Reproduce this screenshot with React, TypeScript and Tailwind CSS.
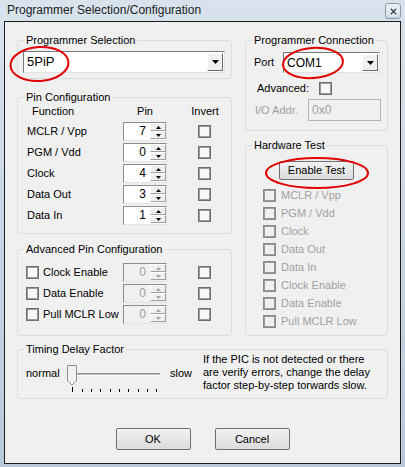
import type { ReactNode } from "react";

const GroupBox = ({
  title,
  className,
  children,
}: {
  title: string;
  className: string;
  children?: ReactNode;
}) => (
  <div className={`relative rounded-[3px] border border-[#d5dfe5] ${className}`}>
    <span className="absolute -top-[8px] left-[6px] bg-[#f0f0f0] px-[2px] leading-[14px] text-black">
      {title}
    </span>
    {children}
  </div>
);

const Arrow = ({ up, disabled }: { up?: boolean; disabled?: boolean }) => (
  <svg width="5" height="3" viewBox="0 0 5 3">
    <path
      d={up ? "M0,3 L5,3 L2.5,0 Z" : "M0,0 L5,0 L2.5,3 Z"}
      fill={disabled ? "#a6a6a6" : "#000"}
    />
  </svg>
);

const SpinHalf = ({ up, disabled }: { up?: boolean; disabled?: boolean }) => (
  <div className="flex h-[8px] w-[16px] items-center justify-center border border-t-white border-l-white border-b-[#a0a0a0] border-r-[#a0a0a0] bg-[#f0f0f0]">
    <Arrow up={up} disabled={disabled} />
  </div>
);

const Spinner = ({ value, disabled }: { value: string; disabled?: boolean }) => (
  <div
    className={`flex h-[19px] w-[44px] shrink-0 border border-t-[#8d8d8d] border-l-[#8d8d8d] border-b-[#e3e3e3] border-r-[#e3e3e3] ${
      disabled ? "bg-[#f0f0f0]" : "bg-white"
    }`}
  >
    <div
      className={`flex-1 pr-[4px] text-right text-[12px] leading-[17px] ${
        disabled ? "text-[#a0a0a0]" : "text-black"
      }`}
    >
      {value}
    </div>
    <div className="flex flex-col py-[0px] pr-[0px]">
      <SpinHalf up disabled={disabled} />
      <SpinHalf disabled={disabled} />
    </div>
  </div>
);

const CheckBox = ({ disabled }: { disabled?: boolean }) => (
  <div
    className={`h-[13px] w-[13px] shrink-0 border border-[#6f6f6f] shadow-[inset_0_0_0_1px_#9a9a9a] ${
      disabled ? "bg-[#f0f0f0] border-[#8a8a8a]" : "bg-[#f7f7f7]"
    }`}
  />
);

const Combo = ({ value, className, textSize }: { value: string; className: string; textSize: string }) => (
  <div
    className={`flex items-center border border-t-[#7a7a7a] border-l-[#7a7a7a] border-b-[#e3e3e3] border-r-[#e3e3e3] bg-white ${className}`}
  >
    <span className={`flex-1 pl-[3px] text-black ${textSize}`}>{value}</span>
    <div className="mr-[1px] flex h-[calc(100%-2px)] w-[16px] items-center justify-center border border-t-white border-l-white border-b-[#696969] border-r-[#696969] bg-[#f0f0f0]">
      <svg width="7" height="4" viewBox="0 0 7 4">
        <path d="M0,0 L7,0 L3.5,4 Z" fill="#000" />
      </svg>
    </div>
  </div>
);

const Button = ({ label }: { label: string }) => (
  <div className="flex h-[22px] w-[75px] items-center justify-center rounded-[2px] border border-[#707070] bg-gradient-to-b from-[#f2f2f2] to-[#dcdcdc] text-black">
    {label}
  </div>
);

const pinRows = [
  { name: "MCLR / Vpp", pin: "7" },
  { name: "PGM / Vdd", pin: "0" },
  { name: "Clock", pin: "4" },
  { name: "Data Out", pin: "3" },
  { name: "Data In", pin: "1" },
];

const advancedRows = ["Clock Enable", "Data Enable", "Pull MCLR Low"];

const testRows = [
  "MCLR / Vpp",
  "PGM / Vdd",
  "Clock",
  "Data Out",
  "Data In",
  "Clock Enable",
  "Data Enable",
  "Pull MCLR Low",
];

export default function App() {
  const ticks = Array.from({ length: 10 }, (_, i) => 8.3 + i * 9.33);

  return (
    <div className="relative flex h-[467px] w-[405px] flex-col bg-gradient-to-b from-[#d9e3ed] to-[#bac9d9] font-['Liberation_Sans',Arial,sans-serif] text-[11px]">
      {/* title bar */}
      <div className="flex h-[21px] items-start justify-between pl-[7px] pr-[4px]">
        <span className="mt-[3px] text-[12px] leading-[15px] text-[#222]">
          Programmer Selection/Configuration
        </span>
        <div className="mt-[3px] flex h-[16px] w-[16px] items-center justify-center rounded-[3px] border border-[#8a97a6] bg-gradient-to-b from-[#eef2f7] to-[#d2dce7]">
          <svg width="9" height="9" viewBox="0 0 9 9">
            <path d="M1.5,1.5 L7.5,7.5 M7.5,1.5 L1.5,7.5" stroke="#fff" strokeWidth="3.6" />
            <path d="M1.8,1.8 L7.2,7.2 M7.2,1.8 L1.8,7.2" stroke="#3b4654" strokeWidth="1.6" />
          </svg>
        </div>
      </div>

      {/* client area */}
      <div className="mx-[4px] h-[443px] border border-[#1e1e1e] bg-[#f0f0f0] px-[12px] pt-[18px]">
        <div className="flex gap-[13px]">
          {/* left column */}
          <div className="flex w-[215px] flex-col">
            <GroupBox title="Programmer Selection" className="h-[39px]">
              <div className="pl-[5px] pt-[10px]">
                <Combo value="5PiP" className="h-[22px] w-[202px]" textSize="text-[13px]" />
              </div>
            </GroupBox>

            <GroupBox title="Pin Configuration" className="mt-[18px] h-[137px]">
              <div className="flex flex-col pl-[9px] pt-[6px]">
                <div className="flex h-[14px] items-center leading-[14px]">
                  <span className="w-[96px] pl-[5px]">Function</span>
                  <span className="w-[44px] text-center">Pin</span>
                  <span className="ml-[16px] w-[44px] text-center">Invert</span>
                </div>
                <div className="mt-[4px] flex flex-col gap-[2px]">
                  {pinRows.map((r) => (
                    <div key={r.name} className="flex h-[19px] items-center">
                      <span className="w-[96px]">{r.name}</span>
                      <Spinner value={r.pin} />
                      <div className="ml-[31px]">
                        <CheckBox />
                      </div>
                    </div>
                  ))}
                </div>
              </div>
            </GroupBox>

            <GroupBox title="Advanced Pin Configuration" className="mt-[15px] h-[87px]">
              <div className="flex flex-col gap-[2px] pl-[8px] pt-[13px]">
                {advancedRows.map((name) => (
                  <div key={name} className="flex h-[19px] items-center">
                    <CheckBox />
                    <span className="ml-[4px] w-[80px]">{name}</span>
                    <Spinner value="0" disabled />
                    <div className="ml-[31px]">
                      <CheckBox />
                    </div>
                  </div>
                ))}
              </div>
            </GroupBox>
          </div>

          {/* right column */}
          <div className="flex w-[143px] flex-col">
            <GroupBox title="Programmer Connection" className="h-[91px]">
              <div className="flex flex-col pt-[11px]">
                <div className="flex items-center pl-[8px]">
                  <span className="w-[29px]">Port</span>
                  <Combo value="COM1" className="h-[21px] w-[97px]" textSize="text-[12px]" />
                </div>
                <div className="mt-[9px] flex h-[13px] items-center pl-[11px]">
                  <span className="w-[62px]">Advanced:</span>
                  <CheckBox />
                </div>
                <div className="mt-[4px] flex items-center pl-[9px]">
                  <span className="w-[53px] text-[#a0a0a0]">I/O Addr.</span>
                  <div className="h-[22px] w-[73px] border border-[#b5b5b5] bg-[#f0f0f0] pl-[3px] pt-[3px] text-[12px] leading-[14px] text-[#a0a0a0]">
                    0x0
                  </div>
                </div>
              </div>
            </GroupBox>

            <GroupBox title="Hardware Test" className="mt-[14px] h-[191px]">
              <div className="flex flex-col pt-[15px]">
                <div className="flex justify-center">
                  <div className="flex h-[19px] w-[75px] items-center justify-center rounded-[2px] border border-[#707070] bg-gradient-to-b from-[#f2f2f2] to-[#dcdcdc] text-black">
                    Enable Test
                  </div>
                </div>
                <div className="mt-[6px] flex flex-col pl-[17px]">
                  {testRows.map((name) => (
                    <div key={name} className="flex h-[18px] items-center">
                      <CheckBox disabled />
                      <span className="ml-[5px] text-[#a0a0a0]">{name}</span>
                    </div>
                  ))}
                </div>
              </div>
            </GroupBox>
          </div>
        </div>

        <GroupBox title="Timing Delay Factor" className="mt-[13px] h-[50px] w-[371px]">
          <div className="flex items-start pl-[8px] pt-[3px]">
            <span className="mt-[14px] w-[38px] leading-[13px]">normal</span>
            <svg className="mt-[9px]" width="100" height="32" viewBox="0 0 100 32">
              <rect x="8" y="11" width="88" height="1" fill="#8e8e8e" />
              <rect x="8" y="12" width="88" height="1" fill="#b8b8b8" />
              <rect x="8" y="13" width="88" height="1" fill="#ffffff" />
              {ticks.map((x, i) => (
                <rect key={i} x={Math.round(x)} y={i === 0 ? 25 : 27} width="1" height={i === 0 ? 5 : 3} fill="#000" />
              ))}
              <path
                d="M3.5,3.5 H12.5 V18.5 L8,23 L3.5,18.5 Z"
                fill="#f2f2f2"
                stroke="#8e8f8f"
                strokeWidth="1"
              />
            </svg>
            <span className="ml-[6px] mt-[14px] w-[22px] leading-[13px]">slow</span>
            <p className="ml-[11px] whitespace-nowrap leading-[13px] text-black">
              If the PIC is not detected or there
              <br />
              are verify errors, change the delay
              <br />
              factor step-by-step torwards slow.
            </p>
          </div>
        </GroupBox>

        <div className="mt-[29px] flex w-[371px] justify-center gap-[24px]">
          <Button label="OK" />
          <Button label="Cancel" />
        </div>
      </div>

      {/* red annotation ellipses */}
      <svg className="pointer-events-none absolute left-0 top-0" width="405" height="467">
        <ellipse cx="39.5" cy="64" rx="29" ry="17" fill="none" stroke="#e00000" strokeWidth="2" transform="rotate(-4 39.5 64)" />
        <ellipse cx="313" cy="63" rx="30" ry="15" fill="none" stroke="#e00000" strokeWidth="2" transform="rotate(-4 313 63)" />
        <ellipse cx="317" cy="173" rx="51" ry="15" fill="none" stroke="#e00000" strokeWidth="2" />
      </svg>
    </div>
  );
}
